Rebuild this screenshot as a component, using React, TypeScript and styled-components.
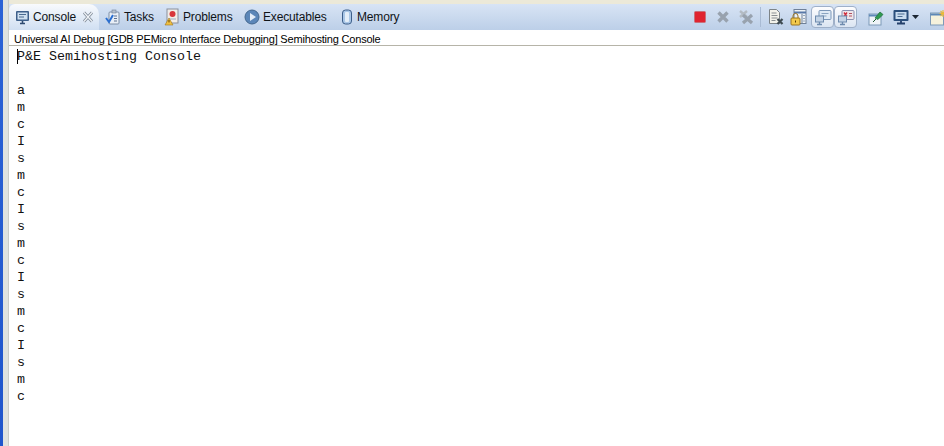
import React from "react";
import styled, { createGlobalStyle } from "styled-components";

const Global = createGlobalStyle`
  html, body { margin: 0; padding: 0; background: #fff; overflow: hidden; }
  #root { width: 944px; height: 446px; }
`;
const Page = styled.div`
  display: flex; width: 944px; height: 446px; overflow: hidden; background: #ece9d8;
`;
const BlueEdge = styled.div`
  width: 3px; flex: none; background: linear-gradient(#2b63d6, #1f56cc);
`;
const Gutter = styled.div`
  width: 5px; flex: none; background: #dfe3e0; border-right: 1px solid #c9cdc9;
`;
const Main = styled.div`
  flex: 1; min-width: 0; display: flex; flex-direction: column; padding-top: 4px;
`;
const TabBar = styled.div`
  height: 26px; flex: none; display: flex; align-items: stretch;
  background: linear-gradient(#d8e4f5, #bccfe8);
`;
const Tabs = styled.div`
  display: flex; align-items: stretch; font: 12px "Liberation Sans", sans-serif; letter-spacing: -0.15px; color: #101418;
`;
const Tab = styled.div<{ $active?: boolean; $w: number }>`
  width: ${p => p.$w}px; display: flex; align-items: center; gap: 3px; padding-left: 6px;
  box-sizing: border-box;
  ${p => p.$active ? "background: linear-gradient(#f8fafd, #d0dff2); border-radius: 6px 10px 0 0;" : ""}
`;
const Close = styled.svg`
  margin-left: 3px; flex: none;
`;
const Tool = styled.div<{ $on?: boolean; $w?: number; $ml?: number }>`
  width: ${p => p.$w ?? 23}px; height: 22px; flex: none; box-sizing: border-box; margin-left: ${p => p.$ml ?? 0}px;
  display: flex; align-items: center; justify-content: center;
  ${p => p.$on ? "background: linear-gradient(#fdfdfe, #dbe5f2); border: 1px solid #9fb0c8; border-radius: 4px;" : ""}
`;
const Toolbar = styled.div`
  margin-left: auto; margin-right: -6px; display: flex; align-items: center;
`;
const Sep = styled.div`
  width: 1px; height: 20px; flex: none; margin-left: 3px; background: #a9bbd4;
`;
const Description = styled.div`
  height: 15px; flex: none; background: #fff; border-bottom: 1px solid #b6b4a8; padding-left: 5px;
  font: 11px/19px "Liberation Sans", sans-serif; letter-spacing: -0.2px; color: #000; white-space: nowrap;
`;
const ConsoleArea = styled.div`
  flex: 1; background: #fff; padding: 2px 0 0 8px; position: relative;
  font: 13.33px/17px "Liberation Mono", monospace; color: #111;
`;
const Line = styled.div`
  height: 17px; white-space: pre;
`;
const Caret = styled.div`
  position: absolute; left: 8px; top: 3px; width: 1px; height: 15px; background: #000;
`;

const ConsoleIcon = () => (
  <svg width="15" height="15" viewBox="0 0 15 15">
    <rect x="1" y="1" width="13" height="10" rx="1" fill="#3d5f8a" />
    <rect x="2.5" y="2.5" width="10" height="7" fill="#cfe0f0" />
    <path d="M4 4.5h7M4 7h5" stroke="#4a6a90" />
    <path d="M5 13.5h5M7.5 11v2" stroke="#2e4a70" strokeWidth="1.6" />
  </svg>
);
const TasksIcon = () => (
  <svg width="16" height="16" viewBox="0 0 16 16">
    <rect x="4" y="3" width="10" height="12" rx="1" fill="#e8eef6" stroke="#7d8ea6" />
    <rect x="7" y="1" width="4" height="3" fill="#b6c0ce" stroke="#6f7f96" strokeWidth=".6" />
    <path d="M9 7h3M9 9.5h3M9 12h3" stroke="#5f7390" />
    <path d="M1 9l3 4 4-7" fill="none" stroke="#2b6fd0" strokeWidth="2" />
  </svg>
);
const ProblemsIcon = () => (
  <svg width="16" height="18" viewBox="0 0 16 18">
    <rect x="3" y="1" width="11" height="14" fill="#f1ece6" stroke="#8a8f9c" />
    <circle cx="8.5" cy="6" r="3" fill="#d8353a" />
    <rect x="5" y="10" width="7" height="2" fill="#c8cdd6" />
    <path d="M5 10l4 7H1z" fill="#f1c040" stroke="#9a7420" strokeWidth=".6" />
    <path d="M5 12v2.4" stroke="#5a3c00" />
  </svg>
);
const ExecIcon = () => (
  <svg width="16" height="16" viewBox="0 0 16 16">
    <circle cx="8" cy="8" r="7" fill="#5b86b8" stroke="#44688f" />
    <path d="M6 4l6 4-6 4z" fill="#e4edf7" />
  </svg>
);
const MemoryIcon = () => (
  <svg width="14" height="16" viewBox="0 0 14 16">
    <rect x="2.5" y="1" width="9" height="14" rx="3" fill="#a9c6e6" stroke="#3d5f8a" />
    <rect x="5" y="3" width="4" height="10" rx="1" fill="#e4eef8" />
  </svg>
);
const CloseIcon = () => (
  <Close width="12" height="12" viewBox="0 0 12 12">
    <path d="M2 1.5l8 9M10 1.5l-8 9" stroke="#7f8a98" strokeWidth="2.8" fill="none" />
    <path d="M2 1.5l8 9M10 1.5l-8 9" stroke="#f2f5f9" strokeWidth="1.2" fill="none" />
  </Close>
);
const StopIcon = () => (
  <svg width="12" height="12" viewBox="0 0 12 12">
    <rect x=".5" y=".5" width="11" height="11" rx="1" fill="#e02430" stroke="#c8707a" />
  </svg>
);
const GreyX = () => (
  <svg width="14" height="14" viewBox="0 0 14 14">
    <path d="M2.5 2.5l9 9M11.5 2.5l-9 9" stroke="#98a2ae" strokeWidth="3.4" />
  </svg>
);
const GreyXX = () => (
  <svg width="16" height="16" viewBox="0 0 16 16">
    <path d="M2 2l7 6M9 2L2 8" stroke="#b3bbc3" strokeWidth="2.4" />
    <path d="M5 6l9 8M14 6l-9 8" stroke="#98a2ae" strokeWidth="3.2" />
  </svg>
);
const DocX = () => (
  <svg width="18" height="18" viewBox="0 0 18 18">
    <path d="M2.5 1.5h7l3 3v11h-10z" fill="#f2f2ea" stroke="#7d8488" />
    <path d="M4.5 5h5M4.5 7.5h6M4.5 10h6M4.5 12.5h4" stroke="#8a8f92" />
    <path d="M10.5 11l5 5M15.5 11l-5 5" stroke="#3e4a50" strokeWidth="2.2" />
  </svg>
);
const LockDoc = () => (
  <svg width="18" height="18" viewBox="0 0 18 18">
    <rect x="4" y="1.5" width="12" height="14" fill="#eef2f6" stroke="#6f8098" />
    <path d="M4 4.5h12" stroke="#5878a8" strokeWidth="2" />
    <path d="M12 6v9" stroke="#6f8098" />
    <path d="M13.5 7.5h1M13.5 10.5h1M13.5 13h1" stroke="#3f5f88" />
    <rect x="1" y="10" width="9" height="7" rx="1" fill="#f2c94c" stroke="#9a7420" />
    <path d="M3 10V8a2.5 2.5 0 015 0v2" fill="none" stroke="#9a7420" />
    <rect x="5" y="12.5" width="1" height="2" fill="#5a3c00" />
  </svg>
);
const OutIcon = () => (
  <svg width="18" height="17" viewBox="0 0 18 17">
    <rect x="5" y="1.5" width="12" height="9" rx="1" fill="#dfeaf5" stroke="#7b97b8" />
    <path d="M7.5 4.5h7M7.5 7h5" stroke="#8aa4c0" />
    <rect x="1.5" y="7" width="8" height="6" fill="#c4d4e6" stroke="#6e8bae" />
    <path d="M3 15.5h5M5.5 13v2" stroke="#6e8bae" strokeWidth="1.4" />
  </svg>
);
const ErrIcon = () => (
  <svg width="18" height="17" viewBox="0 0 18 17">
    <rect x="5" y="1.5" width="12" height="9" rx="1" fill="#efe6ea" stroke="#8a8fb0" />
    <path d="M7 3.5l3 4M10 3.5l-3 4" stroke="#d22c3c" strokeWidth="1.4" />
    <path d="M12 4.5h3M12 7h3" stroke="#b05060" />
    <rect x="1.5" y="7" width="8" height="6" fill="#c4d4e6" stroke="#6e8bae" />
    <path d="M3 15.5h5M5.5 13v2" stroke="#6e8bae" strokeWidth="1.4" />
  </svg>
);
const PinIcon = () => (
  <svg width="18" height="17" viewBox="0 0 18 17">
    <rect x="2" y="5" width="12" height="11" fill="#eef3f8" stroke="#7d9ab8" />
    <path d="M2 6.5h12" stroke="#5d88b8" strokeWidth="2" />
    <path d="M8 9l5-6 3 2.5-5 5z" fill="#2f9a50" stroke="#1d6a38" strokeWidth=".7" />
    <path d="M6 13l3-3" stroke="#1d5a30" />
  </svg>
);
const MonitorIcon = () => (
  <svg width="16" height="16" viewBox="0 0 16 16">
    <rect x=".5" y="1" width="15" height="11" rx="1" fill="#2b4f7c" />
    <rect x="2.5" y="3" width="11" height="7" fill="#c9dcef" />
    <path d="M4.5 5h7M4.5 7.5h5" stroke="#4a6a90" />
    <path d="M4 14.5h8M8 12v2" stroke="#24406a" strokeWidth="1.8" />
  </svg>
);
const Arrow = () => (
  <svg width="7" height="4" viewBox="0 0 7 4"><path d="M0 0h7L3.5 4z" fill="#1d2733" /></svg>
);
const NewIcon = () => (
  <svg width="19" height="17" viewBox="0 0 19 17">
    <rect x="1.5" y="4" width="13" height="12" fill="#f6f2dc" stroke="#7d9ab8" />
    <path d="M1.5 5.5h13" stroke="#5d88b8" strokeWidth="2" />
    <path d="M14 1v7M10.5 4.5h7M11.5 2l5 5M16.5 2l-5 5" stroke="#e9b93a" strokeWidth="1.1" />
  </svg>
);

const output = ["P&E Semihosting Console", "", "a", "m", "c", "I", "s", "m", "c", "I", "s", "m", "c", "I", "s", "m", "c", "I", "s", "m", "c"];

export default function App() {
  return (
    <Page>
      <Global />
      <BlueEdge />
      <Gutter />
      <Main>
        <TabBar>
          <Tabs>
            <Tab $active $w={90}><ConsoleIcon />Console<CloseIcon /></Tab>
            <Tab $w={59}><TasksIcon />Tasks</Tab>
            <Tab $w={80}><ProblemsIcon />Problems</Tab>
            <Tab $w={96}><ExecIcon />Executables</Tab>
            <Tab $w={70}><MemoryIcon />Memory</Tab>
          </Tabs>
          <Toolbar>
            <Tool><StopIcon /></Tool>
            <Tool><GreyX /></Tool>
            <Tool><GreyXX /></Tool>
            <Sep />
            <Tool $ml={3}><DocX /></Tool>
            <Tool><LockDoc /></Tool>
            <Tool $on $ml={1}><OutIcon /></Tool>
            <Tool $on><ErrIcon /></Tool>
            <Tool $ml={7}><PinIcon /></Tool>
            <Tool $ml={2}><MonitorIcon /></Tool>
            <Tool $w={7}><Arrow /></Tool>
            <Tool $ml={8}><NewIcon /></Tool>
          </Toolbar>
        </TabBar>
        <Description>Universal AI Debug [GDB PEMicro Interface Debugging] Semihosting Console</Description>
        <ConsoleArea>
          <Caret />
          {output.map((l, i) => <Line key={i}>{l}</Line>)}
        </ConsoleArea>
      </Main>
    </Page>
  );
}
